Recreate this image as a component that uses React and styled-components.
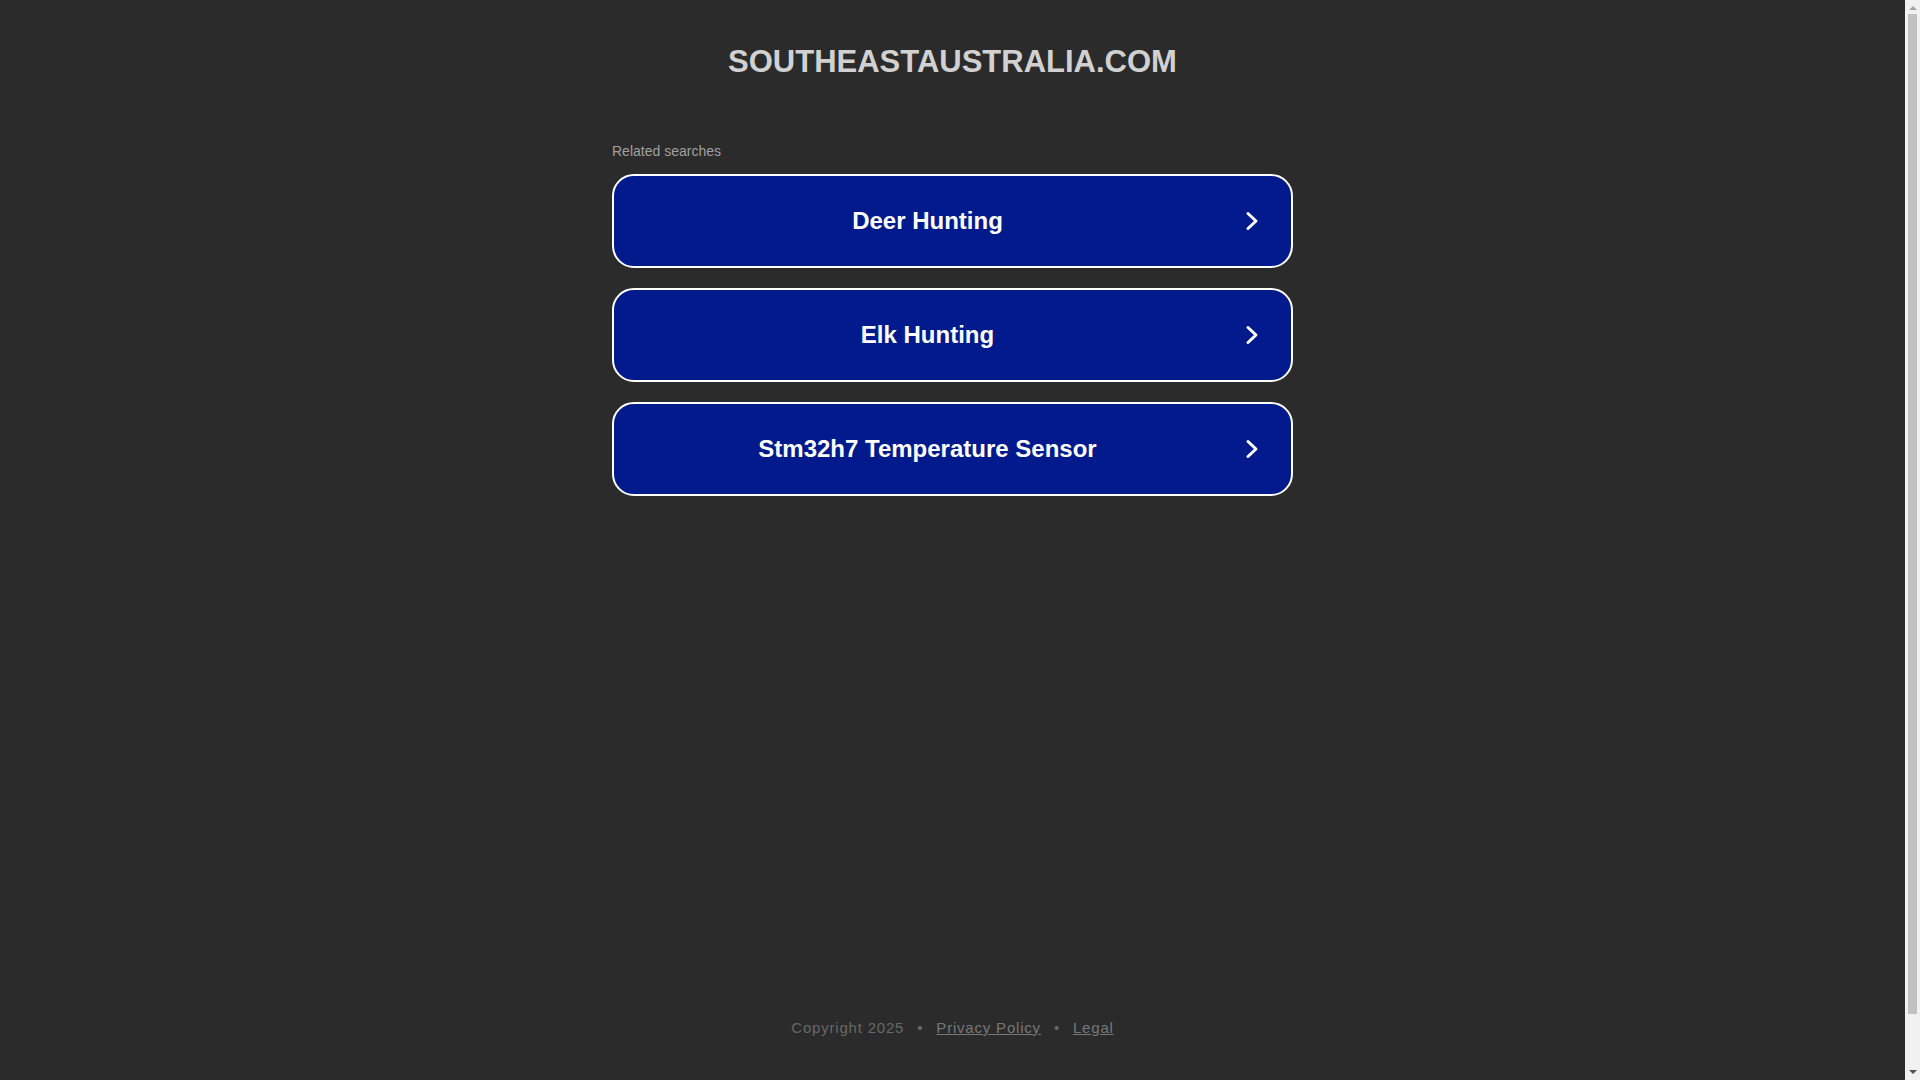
import React from 'react'
import styled, { createGlobalStyle } from 'styled-components';

const GlobalStyle = createGlobalStyle`
html, body {
    margin: 0;
    padding: 0;
    background-color: #2b2b2b;
    font-family: "Liberation Sans", Arial, sans-serif;
}
`;

const searches = ['Deer Hunting', 'Elk Hunting', 'Stm32h7 Temperature Sensor'];

const Chevron = () => (
    <svg width="14" height="20" viewBox="0 0 14 20">
        <polyline points="3,2.5 11,10 3,17.5" fill="none" stroke="white" strokeWidth="3" strokeLinecap="round" strokeLinejoin="round" />
    </svg>
);

const App = () => {
    return (
        <Page>
            <GlobalStyle />
            <Title>SOUTHEASTAUSTRALIA.COM</Title>
            <Main>
                <Label>Related searches</Label>
                <List>
                    {searches.map((s) => (
                        <Search key={s} href="#">
                            <span>{s}</span>
                            <Chevron />
                        </Search>
                    ))}
                </List>
            </Main>
            <Footer>
                <span>Copyright 2025</span>
                <Dot>•</Dot>
                <FootLink href="#">Privacy Policy</FootLink>
                <Dot>•</Dot>
                <FootLink href="#">Legal</FootLink>
            </Footer>
            <Scrollbar>
                <ArrowUp />
                <Thumb />
                <ArrowDown />
            </Scrollbar>
        </Page>
    )
}

export default App;

const Page = styled.div`
min-height: 1130px;
box-sizing: border-box;
padding-right: 15px;
display: flex;
flex-direction: column;
align-items: center;
`;

const Title = styled.h1`
margin: 43px 0 0;
font-size: 31px;
line-height: 38px;
font-weight: bold;
color: #d1d1d1;
`;

const Main = styled.div`
width: 681px;
margin-top: 62px;
`;

const Label = styled.div`
font-size: 14px;
line-height: 17px;
color: #a0a0a0;
margin-bottom: 14px;
`;

const List = styled.div`
display: flex;
flex-direction: column;
gap: 20px;
`;

const Search = styled.a`
display: flex;
align-items: center;
box-sizing: border-box;
height: 94px;
border: 2px solid white;
border-radius: 22px;
background-color: #021a8b;
color: white;
text-decoration: none;
padding-right: 32px;

span{
    flex: 1;
    text-align: center;
    font-size: 24px;
    font-weight: bold;
}

svg{
    margin-left: 4px;
}
`;

const Footer = styled.div`
margin-top: auto;
padding-bottom: 93px;
display: flex;
align-items: center;
font-size: 15px;
line-height: 18px;
letter-spacing: 0.8px;
color: #686868;
`;

const Dot = styled.span`
margin: 0 13px;
`;

const FootLink = styled.a`
color: #777;
text-decoration: underline;
`;

const Scrollbar = styled.div`
position: fixed;
top: 0;
right: 0;
width: 15px;
height: 100vh;
background-color: #f1f1f1;
display: flex;
flex-direction: column;
align-items: center;
`;

const Thumb = styled.div`
width: 9px;
height: 1000px;
margin: 0 0 auto;
background-color: #c1c1c1;
`;

const ArrowUp = styled.div`
width: 0;
height: 0;
margin: 6px 0 4px;
border-left: 4px solid transparent;
border-right: 4px solid transparent;
border-bottom: 4px solid #a3a3a3;
`;

const ArrowDown = styled.div`
width: 0;
height: 0;
margin: 0 0 6px;
border-left: 4px solid transparent;
border-right: 4px solid transparent;
border-top: 4px solid #505050;
`;
